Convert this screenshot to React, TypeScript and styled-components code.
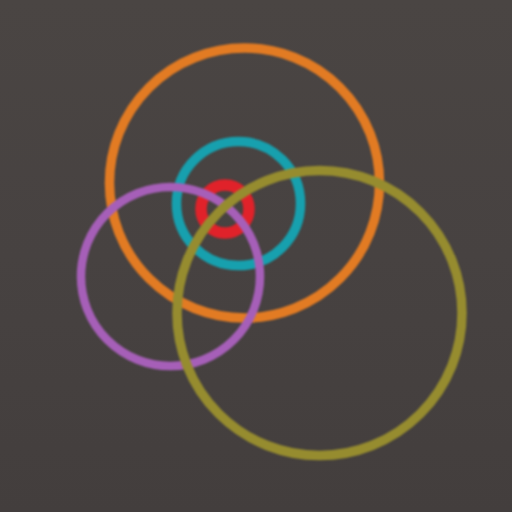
import styled, { createGlobalStyle } from 'styled-components';

const GlobalStyle = createGlobalStyle`
  html, body {
    margin: 0;
    padding: 0;
    width: 100%;
    height: 100%;
    overflow: hidden;
  }
  #root {
    height: 100%;
  }
`;

const Stage = styled.div`
  width: 512px;
  height: 512px;
  background: linear-gradient(180deg, #4a4543 0%, #474241 50%, #433e3d 100%);
  display: flex;
  align-items: center;
  justify-content: center;
`;

const Logo = styled.svg`
  width: 512px;
  height: 512px;
  display: block;
  filter: blur(1.2px);
`;

type Ring = { cx: number, cy: number, r: number, colour: string, width: number };

// drawn back to front
const rings: Ring[] = [
  { cx: 244.5, cy: 183, r: 135, colour: '#e27b23', width: 9.5 },
  { cx: 238.5, cy: 203.5, r: 62, colour: '#17a0ae', width: 9.5 },
  { cx: 225, cy: 209, r: 24, colour: '#e0222a', width: 11.5 },
  { cx: 170.5, cy: 276.5, r: 89.5, colour: '#a65fb8', width: 8.5 },
  { cx: 319.5, cy: 313, r: 142.5, colour: '#968c2f', width: 9.5 },
];

export default function App() {
  return (
    <>
      <GlobalStyle />
      <Stage>
        <Logo viewBox="0 0 512 512">
          {rings.map((ring) => (
            <circle
              key={ring.colour}
              cx={ring.cx}
              cy={ring.cy}
              r={ring.r}
              fill="none"
              stroke={ring.colour}
              strokeWidth={ring.width}
            />
          ))}
        </Logo>
      </Stage>
    </>
  );
}
